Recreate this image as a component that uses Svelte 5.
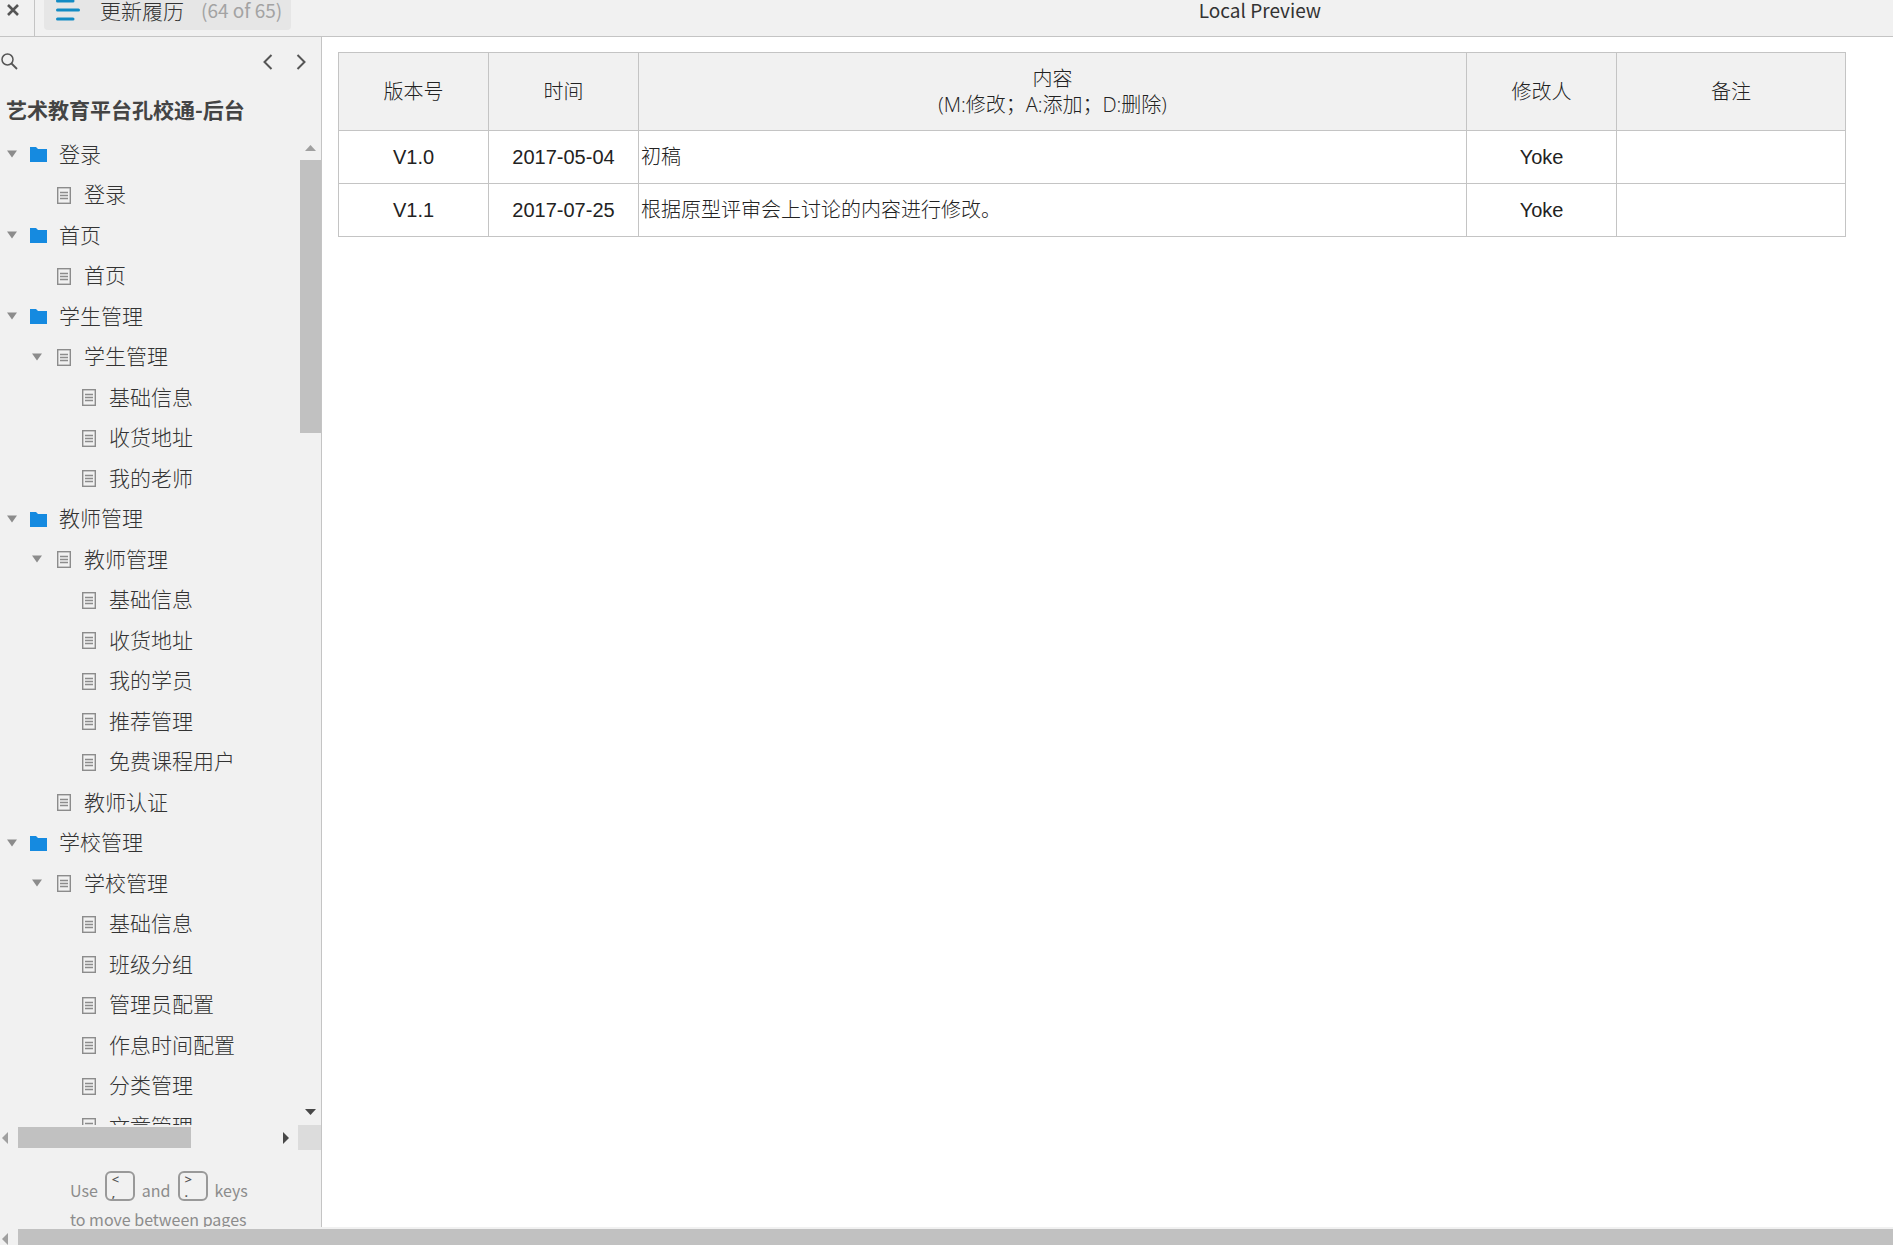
<script>
  const pages = [
    { level: 0, label: '登录', folder: true, open: true },
    { level: 1, label: '登录' },
    { level: 0, label: '首页', folder: true, open: true },
    { level: 1, label: '首页' },
    { level: 0, label: '学生管理', folder: true, open: true },
    { level: 1, label: '学生管理', open: true },
    { level: 2, label: '基础信息' },
    { level: 2, label: '收货地址' },
    { level: 2, label: '我的老师' },
    { level: 0, label: '教师管理', folder: true, open: true },
    { level: 1, label: '教师管理', open: true },
    { level: 2, label: '基础信息' },
    { level: 2, label: '收货地址' },
    { level: 2, label: '我的学员' },
    { level: 2, label: '推荐管理' },
    { level: 2, label: '免费课程用户' },
    { level: 1, label: '教师认证' },
    { level: 0, label: '学校管理', folder: true, open: true },
    { level: 1, label: '学校管理', open: true },
    { level: 2, label: '基础信息' },
    { level: 2, label: '班级分组' },
    { level: 2, label: '管理员配置' },
    { level: 2, label: '作息时间配置' },
    { level: 2, label: '分类管理' },
    { level: 2, label: '文章管理' }
  ];

  const revisions = [
    { version: 'V1.0', date: '2017-05-04', content: '初稿', author: 'Yoke', note: '' },
    { version: 'V1.1', date: '2017-07-25', content: '根据原型评审会上讨论的内容进行修改。', author: 'Yoke', note: '' }
  ];
</script>

<div class="player">
  <header class="topbar">
    <button class="close" aria-label="Close">
      <svg width="14" height="12" viewBox="0 0 14 12"><path d="M2 1L12 11M12 1L2 11" stroke="#555" stroke-width="2.6" /></svg>
    </button>
    <button class="current">
      <svg width="24" height="22" viewBox="0 0 24 22">
        <path d="M1.5 2H17M1.5 11H22.500M1.5 20H17" stroke="#128bc4" stroke-width="3" stroke-linecap="round" />
      </svg>
      <span class="current-name">更新履历</span>
      <span class="current-count">(64 of 65)</span>
    </button>
    <div class="preview">Local Preview</div>
  </header>

  <div class="body">
    <aside class="sidebar">
      <div class="tools">
        <button aria-label="Search">
          <svg width="17" height="17" viewBox="0 0 17 17" fill="none" stroke="#555">
            <circle cx="6.500" cy="6.500" r="5.500" stroke-width="1.500" />
            <path d="M10.500 10.500L16 16" stroke-width="1.800" />
          </svg>
        </button>
        <div class="paging">
          <button aria-label="Previous page">
            <svg width="10" height="16" viewBox="0 0 10 16" fill="none" stroke="#555" stroke-width="2"><path d="M8.500 1L1.500 8L8.500 15" /></svg>
          </button>
          <button aria-label="Next page">
            <svg width="10" height="16" viewBox="0 0 10 16" fill="none" stroke="#555" stroke-width="2"><path d="M1.500 1L8.500 8L1.500 15" /></svg>
          </button>
        </div>
      </div>

      <h1>艺术教育平台孔校通-后台</h1>

      <div class="tree-area">
        <ul class="tree">
          {#each pages as page}
            <li class="level-{page.level}">
              <span class="toggle">
                {#if page.open}
                  <button aria-label="Collapse {page.label}">
                    <svg width="10" height="8" viewBox="0 0 10 8"><path d="M0 0.500H10L5 7.500Z" fill="#8c8c8c" /></svg>
                  </button>
                {/if}
              </span>
              <a href="#page">
                <span class="icon">
                  {#if page.folder}
                    <svg width="17" height="15" viewBox="0 0 17 15"><path d="M0 0H6L8 2H17V15H0Z" fill="#158ae0" /></svg>
                  {:else}
                    <svg width="14" height="17" viewBox="0 0 14 17" fill="none" stroke="#8c8c8c">
                      <rect x="0.700" y="0.700" width="12.600" height="15.600" stroke-width="1.400" />
                      <path d="M3 5.500H11M3 8.500H11M3 11.500H11" stroke-width="1.300" />
                    </svg>
                  {/if}
                </span>
                <span class="label">{page.label}</span>
              </a>
            </li>
          {/each}
        </ul>
        <div class="vbar">
          <svg width="11" height="6" viewBox="0 0 11 6"><path d="M0 6L5.500 0L11 6Z" fill="#a0a0a0" /></svg>
          <div class="vtrack"><div class="vthumb"></div></div>
          <svg width="11" height="6" viewBox="0 0 11 6"><path d="M0 0H11L5.500 6Z" fill="#484848" /></svg>
        </div>
      </div>

      <div class="hbar">
        <svg width="6" height="12" viewBox="0 0 6 12"><path d="M6 0V12L0 6Z" fill="#a0a0a0" /></svg>
        <div class="htrack"><div class="hthumb"></div></div>
        <svg width="6" height="12" viewBox="0 0 6 12"><path d="M0 0V12L6 6Z" fill="#484848" /></svg>
        <div class="corner"></div>
      </div>

      <div class="hint">
        <div class="hint-row">
          <span>Use</span>
          <kbd><span>&lt;</span><span>,</span></kbd>
          <span>and</span>
          <kbd><span>&gt;</span><span>.</span></kbd>
          <span>keys</span>
        </div>
        <div>to move between pages</div>
      </div>
    </aside>

    <main>
      <table>
        <colgroup>
          <col class="narrow" />
          <col class="narrow" />
          <col />
          <col class="narrow" />
          <col class="note" />
        </colgroup>
        <thead>
          <tr>
            <th>版本号</th>
            <th>时间</th>
            <th>内容<br />(M:修改；A:添加；D:删除)</th>
            <th>修改人</th>
            <th>备注</th>
          </tr>
        </thead>
        <tbody>
          {#each revisions as rev}
            <tr>
              <td>{rev.version}</td>
              <td>{rev.date}</td>
              <td class="content">{rev.content}</td>
              <td>{rev.author}</td>
              <td>{rev.note}</td>
            </tr>
          {/each}
        </tbody>
      </table>
    </main>
  </div>

  <div class="page-bar">
    <svg width="6" height="12" viewBox="0 0 6 12"><path d="M6 0V12L0 6Z" fill="#a0a0a0" /></svg>
    <div class="page-thumb"></div>
  </div>
</div>

<style>
  :global(body) {
    margin: 0;
  }

  .player {
    display: flex;
    flex-direction: column;
    height: 100vh;
    overflow: hidden;
    background: #fff;
    color: #333;
    font-family: "Noto Sans CJK SC", sans-serif;
    font-weight: 300;
  }

  svg {
    display: block;
    flex: none;
  }

  button {
    padding: 0;
    border: none;
    background: none;
    color: inherit;
    font: inherit;
    cursor: pointer;
  }

  .topbar {
    display: flex;
    flex: none;
    height: 36px;
    background: #f1f1f1;
    border-bottom: 1px solid #c4c4c4;
  }

  .close {
    width: 35px;
    padding: 0 0 16px 6px;
    border-right: 1px solid #c4c4c4;
  }

  .current {
    display: flex;
    align-items: center;
    height: 30px;
    margin-left: 9px;
    padding: 0 9px 10px 12px;
    background: #e6e6e6;
    border-radius: 0 0 4px 4px;
    line-height: 20px;
  }

  .current-name {
    margin-left: 20px;
    font-size: 21px;
  }

  .current-count {
    margin-left: 17px;
    color: #a3a3a3;
    font-size: 19px;
    font-weight: 400;
  }

  .preview {
    flex: 1;
    padding-right: 572px;
    text-align: right;
    font-size: 19px;
    font-weight: 400;
    line-height: 19px;
  }

  .body {
    display: flex;
    flex: 1;
    min-height: 0;
  }

  .sidebar {
    display: flex;
    flex: none;
    flex-direction: column;
    width: 321px;
    overflow: hidden;
    background: #f1f1f1;
    border-right: 1px solid #c4c4c4;
  }

  .tools {
    display: flex;
    flex: none;
    align-items: center;
    justify-content: space-between;
    height: 49px;
    padding: 0 15px 0 1px;
  }

  .paging {
    display: flex;
    gap: 23px;
  }

  h1 {
    flex: none;
    margin: 0;
    padding: 0 0 2px 6px;
    color: #444;
    font-size: 21px;
    font-weight: 700;
    line-height: 46px;
  }

  .tree-area {
    display: flex;
    flex: 1;
    min-height: 0;
  }

  .tree {
    flex: 1;
    margin: 0;
    padding: 0;
    overflow: hidden;
    list-style: none;
  }

  .tree li {
    display: flex;
    align-items: center;
    height: 40px;
    padding-left: 7px;
    font-size: 21px;
    white-space: nowrap;
  }

  .tree li:nth-child(even) {
    height: 41px;
  }

  .tree .level-1 {
    padding-left: 32px;
  }

  .tree .level-2 {
    padding-left: 57px;
  }

  .toggle {
    width: 10px;
    margin-right: 13px;
  }

  .toggle button {
    display: block;
  }

  .tree a {
    display: flex;
    align-items: center;
    gap: 12px;
    color: inherit;
    line-height: 30px;
    text-decoration: none;
  }

  .icon {
    display: flex;
    justify-content: center;
    width: 17px;
    padding-top: 1px;
  }

  .label {
    padding-bottom: 3px;
  }

  .vbar {
    display: flex;
    flex-direction: column;
    align-items: center;
    gap: 9px;
    width: 21px;
    padding: 11px 0 10px;
  }

  .vtrack {
    flex: 1;
    width: 100%;
  }

  .vthumb {
    height: 29%;
    background: #c1c1c1;
  }

  .hbar {
    display: flex;
    flex: none;
    align-items: center;
    height: 25px;
    padding-left: 2px;
  }

  .htrack {
    flex: 1;
    margin: 0 10px;
  }

  .hthumb {
    width: 68%;
    height: 21px;
    background: #c1c1c1;
  }

  .corner {
    width: 23px;
    height: 25px;
    margin-left: 9px;
    background: #dcdcdc;
  }

  .hint {
    flex: none;
    height: 57px;
    padding: 20px 0 0 70px;
    overflow: hidden;
    color: #8c8c8c;
    font-size: 16px;
    font-weight: 400;
    line-height: 24px;
  }

  .hint-row {
    display: flex;
    align-items: flex-end;
    gap: 7px;
    height: 32px;
    margin-bottom: 5px;
  }

  kbd {
    display: flex;
    flex-direction: column;
    box-sizing: border-box;
    width: 30px;
    height: 30px;
    margin-bottom: 1px;
    padding-left: 5px;
    border: 2px solid #999;
    border-radius: 6px;
    color: #555;
    font-family: "Open Sans", sans-serif;
    font-size: 13px;
    font-weight: 600;
    line-height: 13px;
  }

  main {
    flex: 1;
    padding: 15px 47px 0 16px;
  }

  table {
    width: 100%;
    border-collapse: collapse;
    table-layout: fixed;
    color: #222;
    font-family: "Liberation Sans", "Noto Sans CJK SC", sans-serif;
    font-size: 20px;
    line-height: 26px;
  }

  .narrow {
    width: 150px;
  }

  .note {
    width: 229px;
  }

  th,
  td {
    height: 52px;
    padding: 0 2px;
    border: 1px solid #c4c4c4;
    text-align: center;
  }

  th {
    height: 77px;
    background: #f1f1f1;
    font-family: "Open Sans", "Noto Sans CJK SC", sans-serif;
    font-weight: 300;
  }

  .content {
    text-align: left;
  }

  .page-bar {
    display: flex;
    flex: none;
    gap: 10px;
    height: 16px;
    padding: 2px 0 0 2px;
    background: #f1f1f1;
  }

  .page-bar svg {
    margin-top: 4px;
  }

  .page-thumb {
    flex: 1;
    background: #c1c1c1;
  }
</style>
